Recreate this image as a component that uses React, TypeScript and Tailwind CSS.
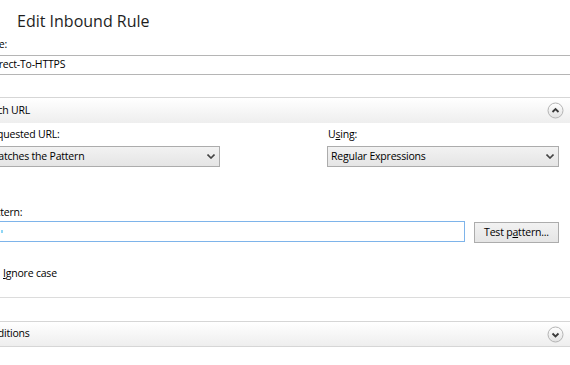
import React from 'react';

const CircleChevron: React.FC<{ up?: boolean }> = ({ up }) => (
  <svg width="17" height="17" viewBox="0 0 17 17">
    <defs>
      <linearGradient id={up ? 'cu' : 'cd'} x1="0" y1="0" x2="0" y2="1">
        <stop offset="0" stopColor="#ffffff" />
        <stop offset="1" stopColor="#e2e2e2" />
      </linearGradient>
    </defs>
    <circle cx="8.5" cy="8.5" r="7.5" fill={`url(#${up ? 'cu' : 'cd'})`} stroke="#b4b4b4" />
    <path
      d={up ? 'M5.5 10 L8.5 7 L11.5 10' : 'M5.5 7.5 L8.5 10.5 L11.5 7.5'}
      stroke="#3a3a3a"
      strokeWidth="1.8"
      fill="none"
    />
  </svg>
);

const SelectChevron: React.FC = () => (
  <svg width="8" height="5" viewBox="0 0 8 5">
    <path d="M0.5 0.5 L4 4 L7.5 0.5" stroke="#444" strokeWidth="1.6" fill="none" />
  </svg>
);

const Select: React.FC<{ value: string }> = ({ value }) => (
  <div className="h-[21px] border border-[#acacac] bg-linear-to-b from-[#f2f2f2] to-[#e5e5e5] flex items-center justify-between pl-[3px] pr-[4px]">
    <span className="leading-none">{value}</span>
    <SelectChevron />
  </div>
);

const SectionHeader: React.FC<{ title: string; up?: boolean; bottom?: boolean }> = ({ title, up, bottom }) => (
  <div
    className={`h-[26px] border-t border-[#d6d6d6] bg-linear-to-b from-white to-[#eeeeee] flex items-center justify-between pl-[6px] pr-[19px] ${
      bottom ? 'border-b' : ''
    }`}
  >
    <span>{title}</span>
    <CircleChevron up={up} />
  </div>
);

export default function App() {
  return (
    <div className="w-[570px] h-[365px] overflow-hidden bg-white text-black text-[10.5px] tracking-[-0.2px] font-['Segoe_UI','Open_Sans',sans-serif]">
      <div className="w-[610px] -ml-[27px] flex flex-col">
        <h1 className="pt-[9px] h-[34px] pl-[44px] text-[16px] tracking-normal leading-[24px] text-[#1e1e1e]">
          Edit Inbound Rule
        </h1>

        <label className="mt-[2px] h-[16px] leading-[16px] pl-[3px]">Name:</label>
        <div className="mt-[3px] h-[20px] border border-[#b5b5b5] flex items-center pl-[4px]">Redirect-To-HTTPS</div>

        <div className="mt-[22px]">
          <SectionHeader title="Match URL" up />
        </div>

        <div className="pl-[12px] pr-[24px] flex flex-col">
          <div className="grid grid-cols-[235px_1fr] gap-x-[107px] mt-[3px]">
            <label className="h-[16px] leading-[16px]">Requested URL:</label>
            <label className="h-[16px] leading-[16px] pl-[1px]">
              U<span className="underline">s</span>ing:
            </label>
            <div className="mt-[4px]">
              <Select value="Matches the Pattern" />
            </div>
            <div className="mt-[4px]">
              <Select value="Regular Expressions" />
            </div>
          </div>

          <label className="mt-[37px] h-[16px] leading-[16px]">Pattern:</label>
          <div className="mt-[1px] flex items-start gap-[9px]">
            <div className="relative flex-1 h-[21px] border border-[#7eb4ea] bg-white">
              {/* faint caret fringe */}
              <span className="absolute left-[15px] top-[8px] w-[2px] h-[3px] bg-[#8fd6f5]" />
            </div>
            <button className="mt-[1px] w-[85px] h-[21px] border border-[#acacac] bg-linear-to-b from-[#f2f2f2] to-[#e5e5e5] flex items-center justify-center">
              Test p<span className="underline">a</span>ttern...
            </button>
          </div>

          <div className="mt-[23px] h-[16px] flex items-center gap-[10px] -ml-[5px]">
            <div className="w-[13px] h-[13px] border border-[#707070] bg-white" />
            <span>
              <span className="underline">I</span>gnore case
            </span>
          </div>
        </div>

        <div className="mt-[15px] h-px bg-[#dcdcdc]" />

        <div className="mt-[23px]">
          <SectionHeader title="Conditions" bottom />
        </div>
      </div>
    </div>
  );
}
